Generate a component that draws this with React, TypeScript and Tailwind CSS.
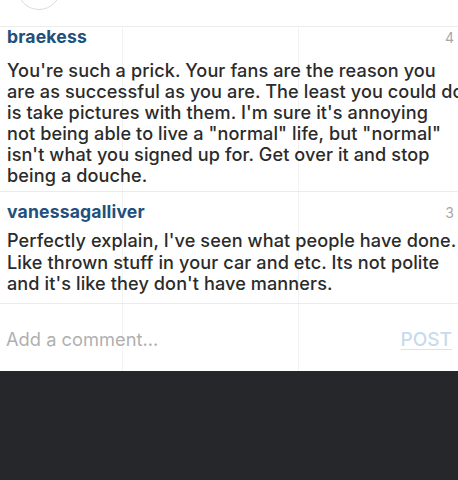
import React from "react";

const comments = [
	{
		user: "braekess",
		likes: "4",
		head: "pt-0",
		body: "pt-[12px] pb-[5px] leading-[21px]",
		lines: [
			"You're such a prick. Your fans are the reason you",
			"are as successful as you are. The least you could do",
			"is take pictures with them. I'm sure it's annoying",
			"not being able to live a \"normal\" life, but \"normal\"",
			"isn't what you signed up for. Get over it and stop",
			"being a douche.",
		],
	},
	{
		user: "vanessagalliver",
		likes: "3",
		head: "pt-[10px]",
		body: "pt-[7px] pb-[8px] leading-[21.5px]",
		lines: [
			"Perfectly explain,  I've seen what people have done.",
			"Like thrown stuff in your car and etc. Its not polite",
			"and it's like they don't have manners.",
		],
	},
];

export default function App() {
	return (
		<div className="w-[458px] h-[480px] overflow-hidden bg-white flex flex-col font-['Inter','Liberation_Sans',sans-serif]">
			<div className="relative isolate h-[371px] flex flex-col">
				{/* avatar peeking from above */}
				<div className="absolute left-[17px] top-[-34px] w-[44px] h-[44px] rounded-full border border-[#dcdcdc]" />
				{/* faint grid lines behind the text */}
				<div className="absolute -z-10 left-[122px] top-[27px] bottom-0 w-px bg-[#f3f3f3]" />
				<div className="absolute -z-10 left-[298px] top-[27px] bottom-0 w-px bg-[#f3f3f3]" />

				<div className="h-[27px] border-b border-[#ececec] shrink-0" />

				{comments.map((c) => (
					<div key={c.user} className="pl-[7px] border-b border-[#ececec]">
						<div className={`flex items-center justify-between pr-[4px] ${c.head}`}>
							<span className="h-[20px] flex items-center text-[17.6px] font-bold text-[#22507c] tracking-[0.15px]">
								{c.user}
							</span>
							<span className="text-[14px] text-[#a8a8a8]">{c.likes}</span>
						</div>
						<div className={`text-[18.1px] font-medium text-[#2b2b2b] tracking-[0.1px] whitespace-nowrap overflow-hidden ${c.body}`}>
							{c.lines.map((l) => (
								<div key={l}>{l}</div>
							))}
						</div>
					</div>
				))}

				<div className="flex-1 flex items-center justify-between px-[6px] pt-[5px]">
					<span className="text-[18.3px] text-[#b0b0b0]">Add a comment...</span>
					<span className="text-[19px] font-medium text-[#c7dbec] underline decoration-[#d8e3ec] underline-offset-[3px]">
						POST
					</span>
				</div>
			</div>
			<div className="flex-1 bg-[#26272b]" />
		</div>
	);
}
